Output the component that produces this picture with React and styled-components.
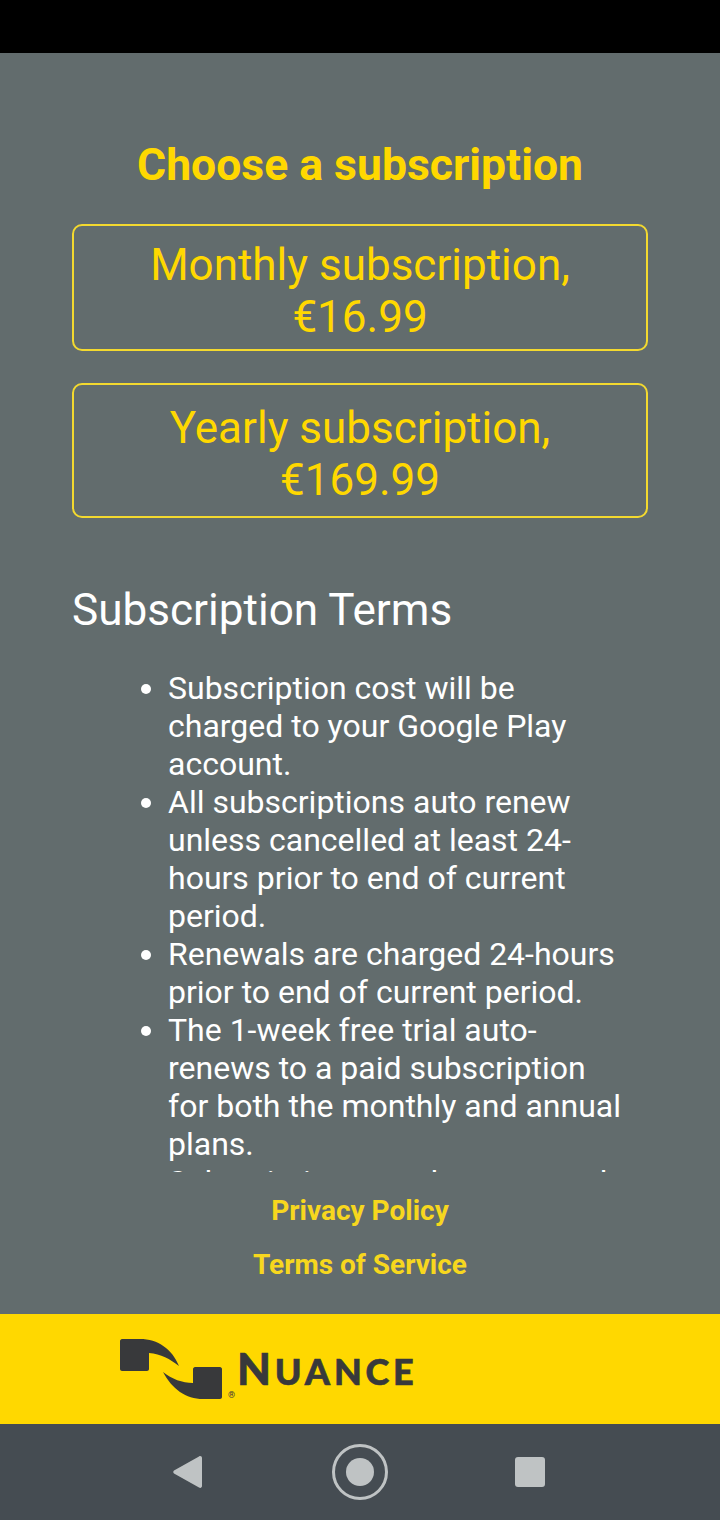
import styled, { createGlobalStyle } from 'styled-components';

const GlobalStyle = createGlobalStyle`
  html, body {
    margin: 0;
    padding: 0;
    background: #000;
  }
  * {
    box-sizing: border-box;
  }
`;

const plans = [
  { id: 'monthly', label: 'Monthly subscription,', price: '€16.99', tall: false },
  { id: 'yearly', label: 'Yearly subscription,', price: '€169.99', tall: true },
];

// the last item is cut off by the scroll area, only its first line shows
const terms = [
  'Subscription cost will be charged to your Google Play account.',
  'All subscriptions auto renew unless cancelled at least 24-hours prior to end of current period.',
  'Renewals are charged 24-hours prior to end of current period.',
  'The 1-week free trial auto-renews to a paid subscription for both the monthly and annual plans.',
  'Subscriptions can be managed',
];

export default function App() {
  return (
    <Screen>
      <GlobalStyle />
      <StatusBar />
      <Content>
        <Scroller>
          <Title>Choose a subscription</Title>
          {plans.map(plan => (
            <PlanButton key={plan.id} $tall={plan.tall}>
              {plan.label}
              <br />
              {plan.price}
            </PlanButton>
          ))}
          <TermsTitle>Subscription Terms</TermsTitle>
          <TermsList>
            {terms.map(term => (
              <li key={term}>{term}</li>
            ))}
          </TermsList>
        </Scroller>
        <Links>
          <LinkText>Privacy Policy</LinkText>
          <LinkText>Terms of Service</LinkText>
        </Links>
      </Content>
      <Brand>
        <LogoMark viewBox="0 0 104 61" aria-hidden="true">
          <path d="M2 0H20C38 0 52 10 59 27C50 20 41 15 29 14V30C29 31 28 32 27 32H2C1 32 0 31 0 30V2C0 1 1 0 2 0Z" />
          <path d="M43 33C52 40 62 44 73 44V30C73 29 74 28 75 28H100C101 28 102 29 102 30V58C102 59 101 60 100 60H83C66 60 52 50 43 33Z" />
        </LogoMark>
        <Registered>®</Registered>
        <Wordmark>
          <BigLetter>N</BigLetter>UANCE
        </Wordmark>
      </Brand>
      <NavBar>
        <svg width="32" height="32" viewBox="0 0 32 32" aria-hidden="true">
          <path d="M26 0.500C27.500 -0.500 29 0.500 29 2V30C29 31.500 27.500 32.500 26 31.500L1 17.500C0 16.800 0 15.200 1 14.500Z" fill="#bfc3c4" />
        </svg>
        <HomeRing>
          <HomeDot />
        </HomeRing>
        <RecentSquare />
      </NavBar>
    </Screen>
  );
}

const Screen = styled.div`
  width: 720px;
  height: 1520px;
  display: flex;
  flex-direction: column;
  overflow: hidden;
  font-family: Roboto, "Liberation Sans", sans-serif;
`;

const StatusBar = styled.div`
  height: 53px;
  flex: none;
  background: #000;
`;

const Content = styled.main`
  flex: 1;
  min-height: 0;
  display: flex;
  flex-direction: column;
  background: #626c6d;
`;

const Scroller = styled.div`
  height: 1119px;
  flex: none;
  overflow: hidden;
  padding: 86px 72px 0;
`;

const Title = styled.h1`
  margin: 0 0 33px;
  font-size: 44.500px;
  line-height: 52px;
  font-weight: 700;
  text-align: center;
  color: #ffd800;
`;

const PlanButton = styled.div`
  height: ${props => (props.$tall ? '135px' : '127px')};
  margin-bottom: 32px;
  padding-top: ${props => (props.$tall ? '17px' : '13px')};
  border: 2px solid #f3d92f;
  border-radius: 10px;
  font-size: 44px;
  line-height: 52px;
  text-align: center;
  color: #ffd800;
`;

const TermsTitle = styled.h2`
  margin: 66px 0 33px;
  font-size: 44.100px;
  line-height: 52px;
  font-weight: 400;
  color: #fff;
`;

const TermsList = styled.ul`
  margin: 0;
  padding: 0 23px 0 96px;
  font-size: 32px;
  line-height: 38px;
  color: #fff;
`;

const Links = styled.div`
  flex: 1;
  display: flex;
  flex-direction: column;
  align-items: center;
  padding-top: 21px;
  gap: 18px;
`;

const LinkText = styled.a`
  font-size: 28px;
  line-height: 36px;
  font-weight: 700;
  color: #f7d71e;
`;

const Brand = styled.footer`
  position: relative;
  height: 110px;
  flex: none;
  display: flex;
  align-items: flex-start;
  padding: 25px 0 0 120px;
  background: #ffd800;
  color: #38393b;
`;

const LogoMark = styled.svg`
  width: 104px;
  height: 61px;
  flex: none;
  fill: currentColor;
`;

const Registered = styled.span`
  position: absolute;
  left: 228px;
  top: 75px;
  font-size: 9px;
  line-height: 12px;
`;

const Wordmark = styled.div`
  margin: 3px 0 0 13px;
  font-family: Lato, "Open Sans", sans-serif;
  font-size: 36px;
  line-height: 52px;
  font-weight: 900;
  letter-spacing: 3.800px;
  -webkit-text-stroke: 0.600px currentColor;
`;

const BigLetter = styled.span`
  font-size: 44px;
`;

const NavBar = styled.nav`
  height: 96px;
  flex: none;
  display: flex;
  align-items: center;
  justify-content: center;
  gap: 127px;
  padding-right: 2px;
  background: #454c52;
`;

const HomeRing = styled.div`
  width: 56px;
  height: 56px;
  display: flex;
  align-items: center;
  justify-content: center;
  border: 3px solid #bfc3c4;
  border-radius: 50%;
`;

const HomeDot = styled.div`
  width: 28px;
  height: 28px;
  border-radius: 50%;
  background: #bfc3c4;
`;

const RecentSquare = styled.div`
  width: 30px;
  height: 30px;
  border-radius: 3px;
  background: #bfc3c4;
`;
